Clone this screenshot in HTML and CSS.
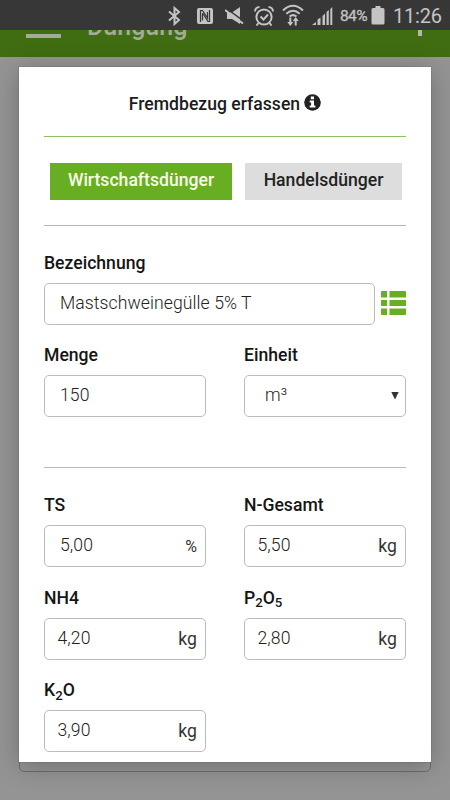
FILE: index.html
```html
<!DOCTYPE html>
<html lang="de">
<head>
<meta charset="utf-8">
<title>Düngung</title>
<link rel="stylesheet" href="styles.css">
</head>
<body>
<div class="screen">
  <header class="status">
    <svg class="bt" width="13" height="20" viewBox="0 0 13 20"><path d="M1 5.500 11 14 6.500 18V2L11 6 1 14.500"/></svg>
    <svg class="nfc" width="16" height="16" viewBox="0 0 16 16"><rect class="fill" width="16" height="16" rx="2"/><path class="dark" d="M3.500 14V2.500H5.500L10.500 10V4M5.500 6v6.500M5.500 5l5.500 8.500h1.500V2"/></svg>
    <svg class="mute" width="20" height="19" viewBox="0 0 20 19"><path class="fill" d="M2 5.500h5L15 0v17l-8-5H2z"/><path class="gap" d="m2 2 18 13"/><path d="m0 3 18 13.500"/></svg>
    <svg class="alarm" width="20" height="20" viewBox="0 0 20 20"><circle cx="10" cy="11" r="7.600"/><path d="m6.500 10.500 3 3 4.500-5M1 5.500C1 3 3 1 5.500 1M19 5.500C19 3 17 1 14.500 1M4.500 17l-2 2.500M15.500 17l2 2.500"/></svg>
    <svg class="wifi" width="22" height="22" viewBox="0 0 22 22"><path d="M1 6.500Q11-3 21 6.500M4.300 9.800Q11 3.800 17.700 9.800M7.500 12.500Q11 9.800 14.500 12.500"/><path class="fill" d="M7.300 13.500h2V18h2l-3 4-3-4h2zM12.700 21.500h2V17h2l-3-4-3 4h2z"/></svg>
    <svg class="signal" width="21" height="19" viewBox="0 0 21 19"><path class="fill" d="M0 18l4-3v3zM5.500 12.500l3-2V18h-3zM10.500 9l2.500-2.500V18h-2.500zM14.500 5l2.300-2v15h-2.300zM18.300 2l2-2v18h-2z"/></svg>
    <span class="percent">84%</span>
    <svg class="battery" width="14" height="19" viewBox="0 0 14 19"><path class="fill" d="M4.500 0h5v2H12q1.500 0 1.500 1.500V17q0 1.500-1.500 1.500H2Q.5 18.500.5 17V3.500Q.5 2 2 2h2.500z"/></svg>
    <span class="clock">11:26</span>
  </header>
  <div class="appbar">
    <span class="menu"></span>
    <span class="apptitle">Düngung</span>
    <span class="plus"></span>
  </div>
  <div class="card"></div>
  <main class="modal">
    <h1 class="title"><span>Fremdbezug erfassen</span>
      <svg width="17" height="17" viewBox="0 0 17 17"><circle cx="8.500" cy="8.500" r="8.300"/><path d="M6.800 2.600h3.200v2.600H6.800zM5.700 6.500H10v5h1.400v2H5.700v-2h1.400v-3H5.700z"/></svg>
    </h1>
    <div class="tabs">
      <button class="tab active"><span>Wirtschaftsdünger</span></button>
      <button class="tab"><span>Handelsdünger</span></button>
    </div>
    <div class="group first">
      <div class="field wide">
        <label>Bezeichnung</label>
        <div class="line">
          <div class="box name"><span>Mastschweinegülle 5% T</span></div>
          <svg class="list" width="25" height="24" viewBox="0 0 25 24"><path d="M1 0h5v6.500H0V1q0-1 1-1zM8.500 0H24q1 0 1 1v5.500H8.500zM0 9h6v6H0zM8.500 9H25v6H8.500zM0 17.500h6V24H1q-1 0-1-1zM8.500 17.500H25V23q0 1-1 1H8.500z"/></svg>
        </div>
      </div>
      <div class="field">
        <label>Menge</label>
        <div class="box">150</div>
      </div>
      <div class="field">
        <label>Einheit</label>
        <div class="box select">m³<svg width="8" height="8" viewBox="0 0 8 8"><path d="M.3 0h7.400L4 7.500z"/></svg></div>
      </div>
    </div>
    <div class="group second">
      <div class="field">
        <label>TS</label>
        <div class="box">5,00<span class="unit pct">%</span></div>
      </div>
      <div class="field">
        <label>N-Gesamt</label>
        <div class="box tight">5,50<span class="unit">kg</span></div>
      </div>
      <div class="field">
        <label>NH4</label>
        <div class="box tight">4,20<span class="unit">kg</span></div>
      </div>
      <div class="field">
        <label>P<sub>2</sub>O<sub>5</sub></label>
        <div class="box tight">2,80<span class="unit">kg</span></div>
      </div>
      <div class="field">
        <label>K<sub>2</sub>O</label>
        <div class="box tight">3,90<span class="unit">kg</span></div>
      </div>
    </div>
  </main>
</div>
</body>
</html>
```
FILE: styles.css
```css
* { box-sizing: border-box; }
body { margin: 0; font-family: Roboto, "Liberation Sans", sans-serif; color: #1c1c1c; }
.screen { position: relative; width: 450px; height: 800px; overflow: hidden; background: #949494; }

.status { display: flex; align-items: flex-start; height: 30px; padding-left: 168px; background: #373737; color: #c4c4c4; }
.status svg { flex: none; fill: none; stroke: #c4c4c4; stroke-width: 2; }
.status .fill { fill: #c4c4c4; stroke: none; }
.status .dark { stroke: #373737; stroke-width: 1.200; }
.status .gap { stroke: #373737; stroke-width: 1.500; }
.bt { margin-top: 6px; }
.nfc { margin: 8px 0 0 16px; }
.mute { margin: 7px 0 0 12px; }
.alarm { margin: 6px 0 0 9px; }
.wifi { margin: 4px 0 0 8px; }
.signal { margin: 7px 0 0 8px; }
.percent { width: 30px; margin: 7px 0 0 7px; font-size: 15.500px; line-height: 19px; letter-spacing: -0.600px; -webkit-text-stroke: 0.300px; }
.battery { margin: 6px 0 0 1px; }
.clock { margin: 4px 0 0 8px; font-size: 20px; line-height: 24px; letter-spacing: -0.200px; }

.appbar { display: flex; align-items: flex-start; height: 27px; padding-left: 26px; overflow: hidden; background: #406c12; }
.menu { width: 35px; height: 4px; margin-top: 4px; background: #a3ac98; }
.apptitle { margin: -17px 0 0 26px; font-size: 25px; font-weight: 500; line-height: 28px; color: #a3ac98; }
.plus { width: 4px; height: 6px; margin-left: auto; margin-right: 28px; background: #b1b9a7; }

.card { position: absolute; left: 19px; top: 80px; width: 412px; height: 692px; border: 1px solid #6d6d6d; border-radius: 5px; }
.modal { position: absolute; left: 19px; top: 67.450px; width: 412px; height: 695px; padding: 0 25px; background: #fff; box-shadow: 0 4px 24px rgba(0, 0, 0, 0.250), 0 0 1px rgba(0, 0, 0, 0.400); }

.title { display: flex; align-items: center; justify-content: center; gap: 4px; height: 69.500px; margin: 0; padding-top: 4px; border-bottom: 1px solid #8cc063; font-size: 17.600px; font-weight: 500; }
.title svg { margin-top: -3px; fill: #222; }
.title svg path { fill: #fff; }

.tabs { display: flex; gap: 13px; height: 89px; padding: 26px 4px 25px 6px; border-bottom: 1px solid #b5b5b5; }
.tab { flex: 0 0 157px; height: 37px; padding: 0 0 2px; border: 0; background: #ddd; color: #222; font: 500 17.600px Roboto, sans-serif; }
.tab.active { flex-basis: 182px; background: #68ae23; color: #f8fce8; }

.group { display: grid; grid-template-columns: 162px 162px; column-gap: 38px; row-gap: 18.500px; align-content: start; }
.first { height: 242.500px; padding-top: 25px; border-bottom: 1px solid #bbb; }
.second { padding-top: 25px; }
.wide { grid-column: 1 / -1; }
.field label { display: block; height: 24px; margin-bottom: 8px; font-size: 17.600px; font-weight: 500; line-height: 24px; color: #151515; }
.field sub { position: relative; top: -1px; font-size: 13.200px; line-height: 0; }
.line { display: flex; align-items: center; gap: 6px; }
.list { flex: none; margin-top: -2px; fill: #68ae23; }
.box { display: flex; align-items: center; height: 42px; padding: 0 8px 2px 15px; border: 1px solid #bbb; border-radius: 5px; font-size: 17.600px; font-weight: 300; letter-spacing: 0.080px; color: #222; }
.name { width: 331px; }
.tight { padding-left: 12.500px; }
.select { padding-left: 20px; padding-right: 6px; }
.select svg { margin: 2px 0 0 auto; fill: #333; }
.unit { margin: 2px 0 0 auto; font-weight: 400; color: #333; }
.pct { font-size: 16px; }
```
